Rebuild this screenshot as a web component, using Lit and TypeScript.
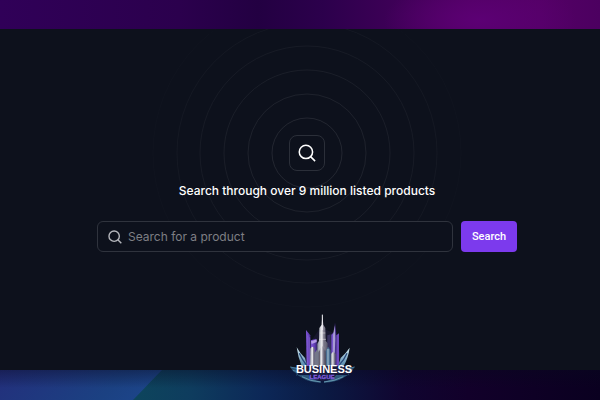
import { LitElement, html, svg, css } from "lit";
import { customElement, property } from "lit/decorators.js";

const RINGS = [
  { r: 35, opacity: 0.09 },
  { r: 59, opacity: 0.07 },
  { r: 83, opacity: 0.055 },
  { r: 107, opacity: 0.045 },
  { r: 130, opacity: 0.03 },
  { r: 154, opacity: 0.012 },
];

@customElement("search-icon")
class SearchIcon extends LitElement {
  static styles = css`
    :host {
      display: block;
    }
    svg {
      display: block;
      width: 100%;
      height: 100%;
    }
  `;
  @property({ type: Number }) stroke = 1.5;
  render() {
    return html`<svg viewBox="0 0 20 20" fill="none" stroke="currentColor" stroke-width=${this.stroke} aria-hidden="true">
      <circle cx="8.8" cy="8.8" r="7.4" />
      <path d="M14 14 L19 19" />
    </svg>`;
  }
}

@customElement("league-logo")
class LeagueLogo extends LitElement {
  static styles = css`
    :host {
      display: block;
    }
    svg {
      display: block;
      width: 100%;
    }
    .name {
      font: 700 11px "Liberation Sans", Arial, sans-serif;
      fill: #ffffff;
    }
    .sub {
      font: 700 6px "Liberation Sans", Arial, sans-serif;
      fill: #8a66ea;
      stroke: #7653d2;
      stroke-width: 0.3px;
    }
  `;
  render() {
    return html`<svg viewBox="0 0 85 80" role="img" aria-label="Business League">
      <defs>
        <linearGradient id="steel" x1="0" x2="1">
          <stop offset="0" stop-color="#8a90a0" />
          <stop offset="0.45" stop-color="#f0eff2" />
          <stop offset="0.6" stop-color="#8b8898" />
          <stop offset="1" stop-color="#555468" />
        </linearGradient>
        <linearGradient id="violet" x1="0" x2="1">
          <stop offset="0" stop-color="#8259dc" />
          <stop offset="0.6" stop-color="#5d3ab0" />
          <stop offset="1" stop-color="#2f2560" />
        </linearGradient>
        <linearGradient id="ice" x1="0" y1="0" x2="0" y2="1">
          <stop offset="0" stop-color="#d3ebf2" />
          <stop offset="1" stop-color="#4d83a8" />
        </linearGradient>
      </defs>
      <g transform="scale(0.333333)">
        <path d="M72 160 L78 115 L94 92 L116 60 L140 60 L164 70 L180 130 L184 160 L184 190 L66 190Z" fill="#17172d" />
        <path d="M78 60 L91 76 L94 170 L80 170Z" fill="url(#violet)" />
        <path d="M84 76 L84 168 M89 82 L89 168" stroke="#9a78e5" stroke-width="1.5" />
        <path d="M93 91 L108 86 L112 100 L112 170 L94 170Z" fill="url(#violet)" />
        <path d="M93 94 L110 88 L110 96 L95 102Z" fill="#b49be8" />
        <path d="M165 38 L170 80 L170 170 L154 170 L154 74 L163 65Z" fill="url(#violet)" />
        <path d="M164 46 L166 84 L163 166 L158 166 L159 76Z" fill="#a79bd4" />
        <path d="M169 76 L177 70 L177 170 L169 170Z" fill="#704ac0" />
        <path d="M142 76 L152 73 L154 170 L140 170Z" fill="#37315e" />
        <path d="M127 12 L130 44 L136 54 L137 92 L143 100 L143 190 L112 190 L112 102 L117 92 L118 54 L125 44Z" fill="url(#steel)" />
        <path d="M127 14 L127 60" stroke="#ececf0" stroke-width="3" />
        <path d="M133 60 L133 110" stroke="#696775" stroke-width="1.5" />
        <path d="M119 69 L136 69 M117 88 L138 88" stroke="#f3eeee" stroke-width="1.5" />
        <path d="M91 116 Q98 104 104 116 L106 176 L90 176Z" fill="url(#steel)" />
        <path d="M104 128 L112 118 L118 130 L118 180 L104 180Z" fill="#747789" />
        <path d="M117 121 L127 108 L135 122 L136 186 L118 186Z" fill="url(#steel)" />
        <path d="M118 122 V180 M136 122 V180" stroke="#3c3140" stroke-width="2" />
        <path d="M137 124 L144 110 L151 120 L152 176 L138 176Z" fill="#496d91" />
        <path d="M144 117 L144 170" stroke="#b1cbda" stroke-width="3" />
        <path d="M153 132 Q160 119 167 133 L166 172 L153 172Z" fill="url(#steel)" />
        <path d="M50 112 Q61 132 75 144 L82 170 L66 170 Q54 143 50 112Z" fill="url(#ice)" />
        <path d="M209 113 Q196 132 182 144 L174 170 L190 170 Q205 144 209 113Z" fill="url(#ice)" />
        <path d="M58 130 Q66 149 80 166 M201 130 Q193 149 177 166" fill="none" stroke="#28477a" stroke-width="4" />
        <path d="M30 170 L60 174 L60 190 L48 198 L50 191 L39 184Z M224 170 L200 174 L200 190 L208 198 L206 191 L216 184Z" fill="#274d70" />
        <path d="M31 171 L54 176 M39 181 L60 187 M224 171 L203 176 M215 181 L194 187" stroke="#659ab5" stroke-width="2" />
        <path d="M54 168 H206 V193 H164 L156 208 L127 214 L97 208 L90 193 H54Z" fill="#171a3e" />
        <path d="M52 195 L86 195 Q96 210 122 214 L122 218 Q87 217 66 203Z M204 195 L168 195 Q158 210 132 214 L132 218 Q168 217 190 203Z" fill="#2c5478" />
        <path d="M66 200 Q91 214 122 216 M190 200 Q163 214 132 216" fill="none" stroke="#83b9ca" stroke-width="2" />
      </g>
      <text class="sub" x="42" y="69" text-anchor="middle">LEAGUE</text>
      <text class="name" x="44" y="63" text-anchor="middle">BUSINESS</text>
    </svg>`;
  }
}

@customElement("app-root")
class AppRoot extends LitElement {
  static styles = css`
    :host {
      display: flex;
      flex-direction: column;
      min-height: 100vh;
      box-sizing: border-box;
      padding: 29px 0 30px;
      position: relative;
      overflow: hidden;
      font-family: Inter, "Liberation Sans", sans-serif;
      color: #ffffff;
      background:
        radial-gradient(ellipse 16% 40px at 80% 20px, #5c0074, transparent) top / 100% 29px no-repeat,
        linear-gradient(90deg, #300058, #2b004d 30%, #230042 43%, #2c004c 54%, #3e0057 66%, #500062 78%, #540066 90%, #4c0060) top / 100% 29px no-repeat,
        linear-gradient(180deg, rgba(8, 8, 30, 0.4), transparent 18px) bottom / 100% 30px no-repeat,
        linear-gradient(134deg, #232f7c, #1b4182 92px, #1c4488 116px, transparent 117px) bottom left / 300px 30px no-repeat,
        linear-gradient(90deg, #0d455c 22%, #0e3c5e 32%, #0c2757 44%, #0b1a43 54%, #100530 67%, #12002a 78%, #0a0020) bottom / 100% 30px no-repeat;
    }
    .panel {
      flex: 1;
      display: flex;
      flex-direction: column;
      align-items: center;
      box-sizing: border-box;
      padding: 106px 24px 0 38px;
      background: #0d111c;
      position: relative;
      overflow: hidden;
    }
    .badge {
      position: relative;
      box-sizing: border-box;
      width: 36px;
      height: 36px;
      padding: 8px;
      border: 1px solid #2b2f39;
      border-radius: 8px;
    }
    .rings {
      position: absolute;
      left: 50%;
      top: 50%;
      width: 320px;
      height: 320px;
      transform: translate(-50%, -50%);
      pointer-events: none;
    }
    .title {
      position: relative;
      margin: 12px 0 22px;
      font-size: 12px;
      font-weight: 500;
      line-height: 16px;
    }
    .form {
      position: relative;
      display: flex;
      gap: 8px;
      width: 100%;
      max-width: 420px;
    }
    .field {
      flex: 1;
      min-width: 0;
      display: flex;
      align-items: center;
      gap: 6px;
      box-sizing: border-box;
      height: 31px;
      padding: 0 10px;
      border: 1px solid #2f333d;
      border-radius: 6px;
      background: #0d111c;
    }
    .glass {
      flex: none;
      width: 14px;
      height: 14px;
      color: #b4b6bc;
    }
    .input {
      flex: 1;
      min-width: 0;
      padding: 0;
      border: 0;
      outline: 0;
      background: none;
      color: #ffffff;
      font: 400 12px/16px Inter, "Liberation Sans", sans-serif;
    }
    .input::placeholder {
      color: #7e7f84;
      opacity: 1;
    }
    .button {
      width: 56px;
      height: 31px;
      padding: 0;
      border: 0;
      border-radius: 4px;
      background: #7c3aed;
      color: #ffffff;
      font: 500 11px/16px Roboto, "Liberation Sans", sans-serif;
      cursor: pointer;
    }
    .logo {
      position: absolute;
      left: 50%;
      bottom: 10px;
      width: 85px;
      margin-left: -20px;
    }
  `;
  render() {
    return html`
      <main class="panel">
        <div class="badge">
          <svg class="rings" viewBox="-160 -160 320 320" fill="none" stroke="#ffffff" aria-hidden="true">
            ${RINGS.map((ring) => svg`<circle r=${ring.r} stroke-opacity=${ring.opacity} />`)}
          </svg>
          <search-icon .stroke=${1.7}></search-icon>
        </div>
        <h1 class="title">Search through over 9 million listed products</h1>
        <form class="form" @submit=${(e: Event) => e.preventDefault()}>
          <label class="field">
            <search-icon class="glass" .stroke=${2}></search-icon>
            <input class="input" type="text" aria-label="Search for a product" placeholder="Search for a product" />
          </label>
          <button class="button" type="submit">Search</button>
        </form>
      </main>
      <league-logo class="logo"></league-logo>
    `;
  }
}
